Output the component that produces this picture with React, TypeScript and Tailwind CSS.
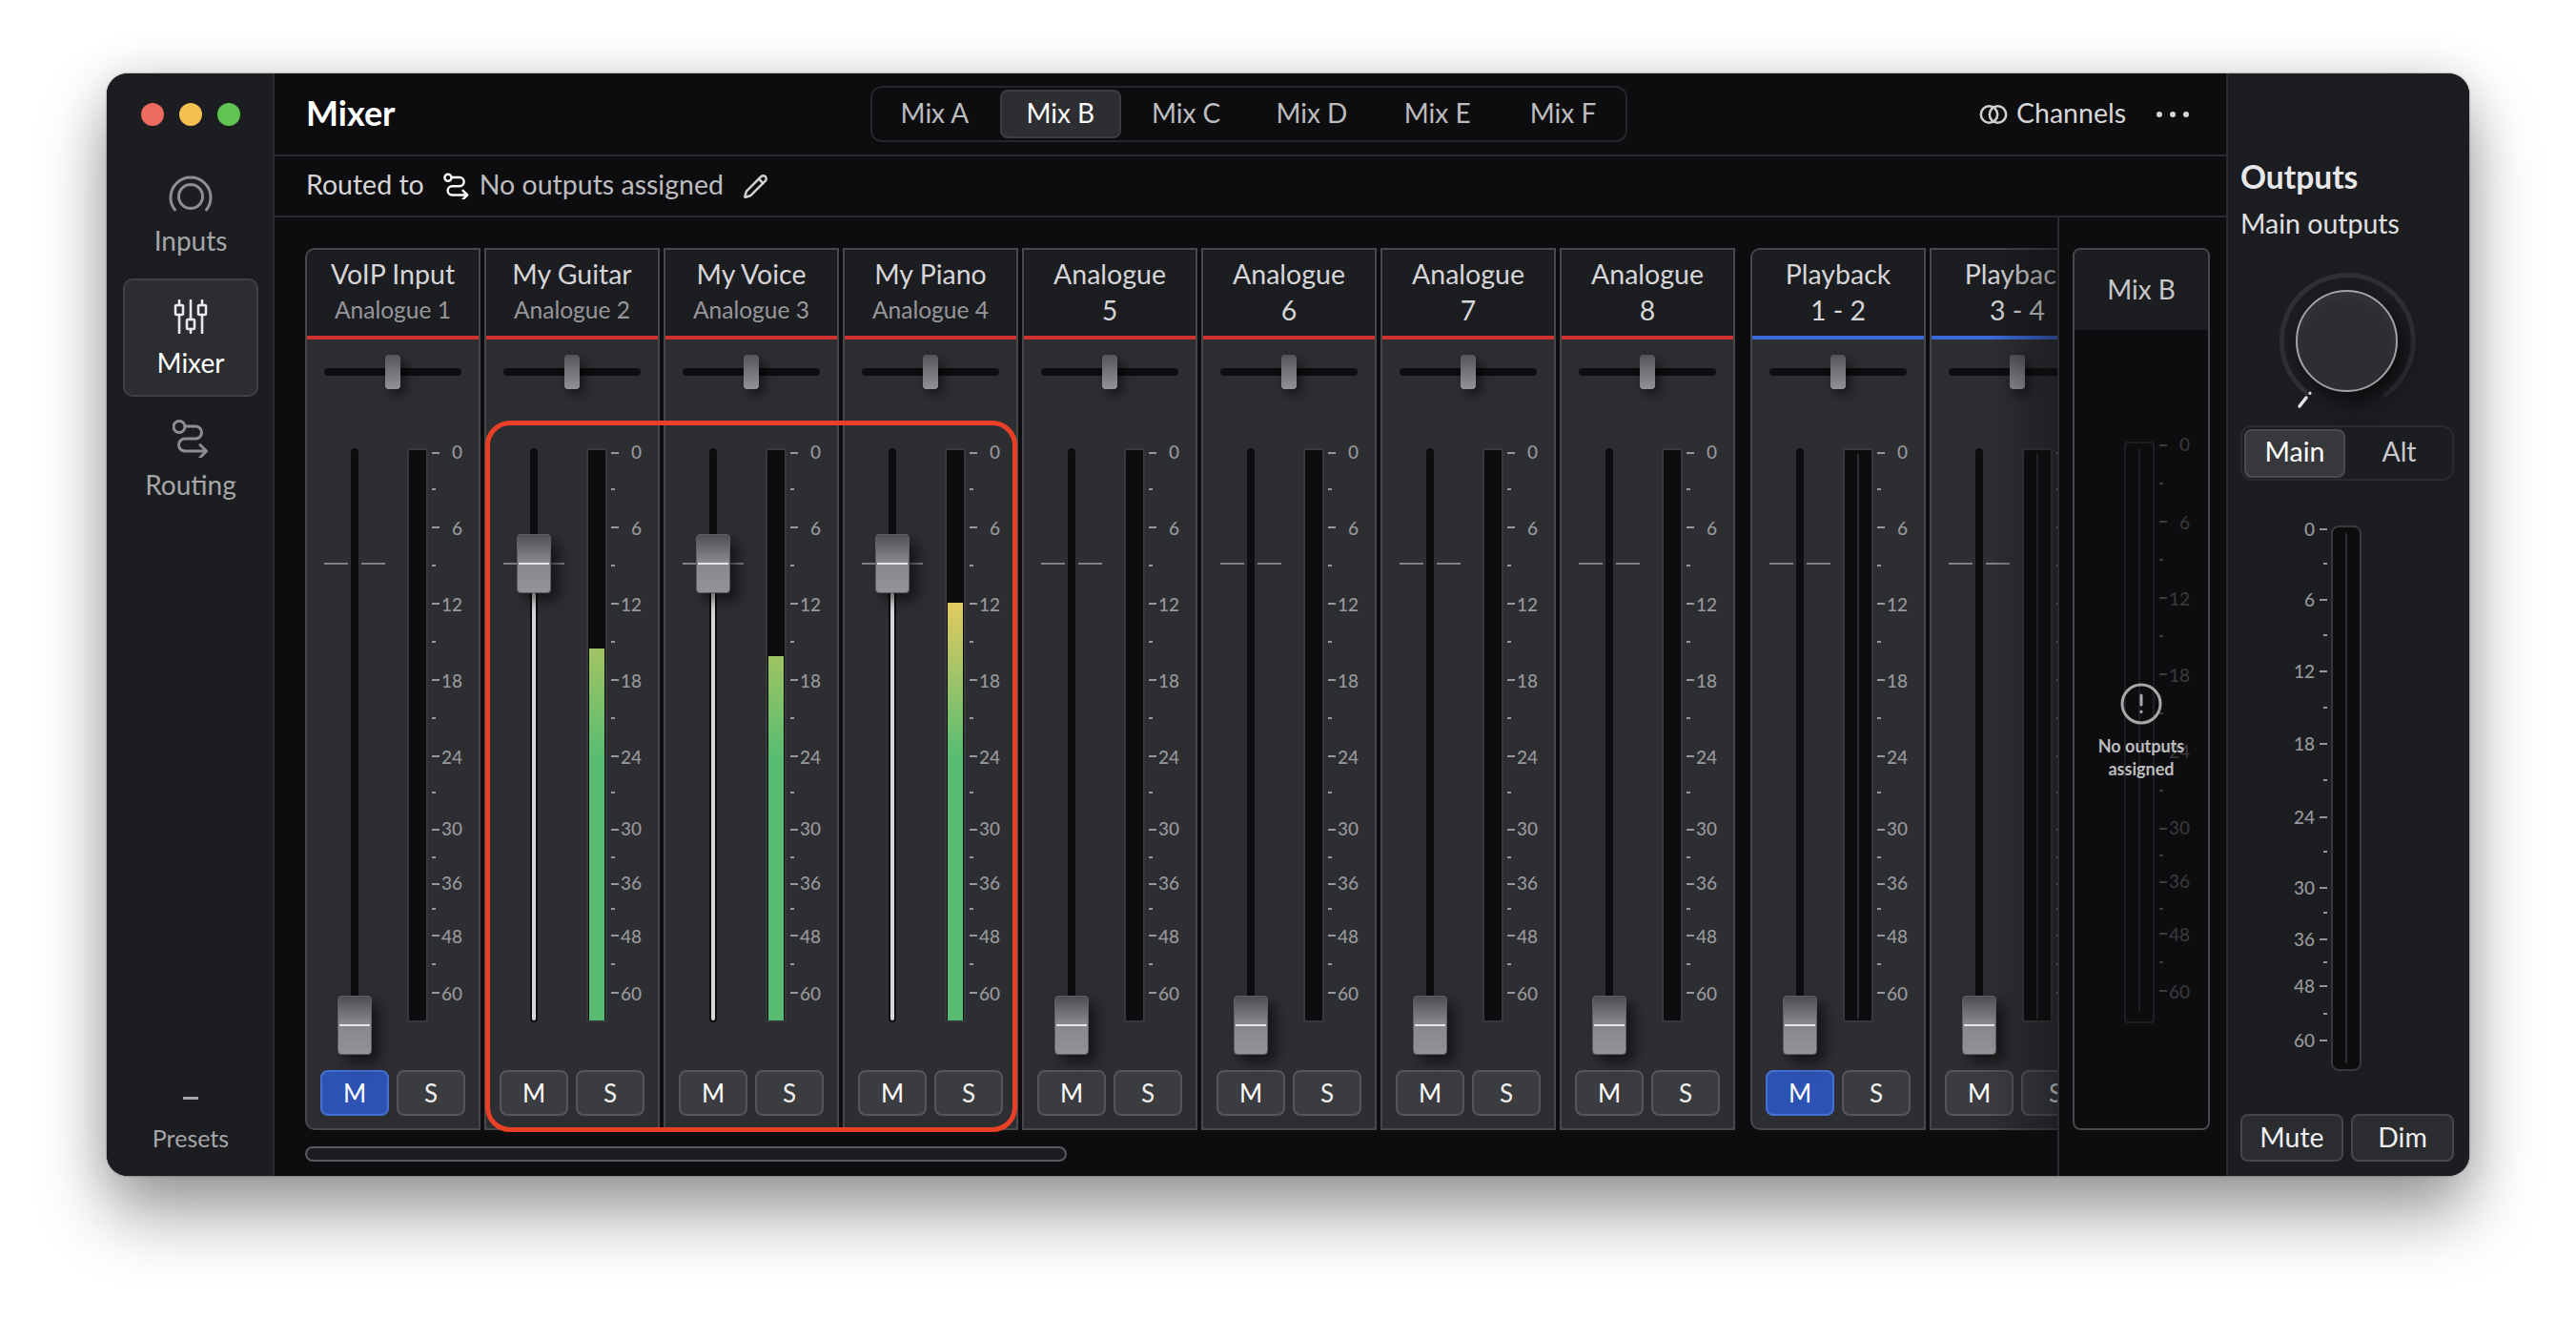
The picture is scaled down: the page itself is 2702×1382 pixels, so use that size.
import React from "react";
import { Pencil } from "lucide-react";

type Mark = { y: number; label?: string };

const stripMarks: Mark[] = [
  { y: 5, label: "0" }, { y: 43 }, { y: 83, label: "6" }, { y: 123 }, { y: 163, label: "12" }, { y: 203 },
  { y: 243, label: "18" }, { y: 283 }, { y: 323, label: "24" }, { y: 361 }, { y: 400, label: "30" }, { y: 429 },
  { y: 457, label: "36" }, { y: 483 }, { y: 511, label: "48" }, { y: 541 }, { y: 571, label: "60" },
];
const mixMarks: Mark[] = [
  { y: 4, label: "0" }, { y: 44 }, { y: 84, label: "6" }, { y: 124 }, { y: 164, label: "12" }, { y: 204 },
  { y: 244, label: "18" }, { y: 285 }, { y: 324, label: "24" }, { y: 366 }, { y: 406, label: "30" }, { y: 434 },
  { y: 462, label: "36" }, { y: 490 }, { y: 516, label: "48" }, { y: 546 }, { y: 576, label: "60" },
];
const outMarks: Mark[] = [
  { y: 4, label: "0" }, { y: 40 }, { y: 78, label: "6" }, { y: 115 }, { y: 153, label: "12" }, { y: 191 },
  { y: 229, label: "18" }, { y: 267 }, { y: 306, label: "24" }, { y: 342 }, { y: 380, label: "30" }, { y: 406 },
  { y: 434, label: "36" }, { y: 458 }, { y: 483, label: "48" }, { y: 512 }, { y: 540, label: "60" },
];

function Scale({ marks, tickColor, textColor, left }: { marks: Mark[]; tickColor: string; textColor: string; left?: boolean }) {
  return (
    <div className="flex flex-col w-full">
      <div style={{ height: marks[0].y }} />
      {marks.map((m, i) => {
        const h = i < marks.length - 1 ? marks[i + 1].y - m.y : 20;
        const high = m.label === "0" || m.label === "30" || m.label === "36";
        const tick = (
          <div className={`flex w-[10px] shrink-0 ${left ? "justify-end" : "justify-start"}`}>
            <div className={`h-[2px] -mt-[1px] ${m.label ? "w-[8px]" : "w-[4px]"} ${tickColor}`} />
          </div>
        );
        return (
          <div key={i} className="flex items-start" style={{ height: h }}>
            {!left && tick}
            <div className={`flex-1 text-right h-[20px] leading-[20px] text-[19px] font-medium ${textColor} ${left ? "pr-[3px] -mt-[10px]" : high ? "-mt-[11px]" : "-mt-[9px]"}`}>{m.label}</div>
            {left && tick}
          </div>
        );
      })}
    </div>
  );
}

function Fader({ active }: { active: boolean }) {
  return (
    <div className="relative w-[95px] h-full pl-[46px]">
      <div className="w-[8px] h-full rounded-full bg-[#0d0d0f] flex flex-col items-center justify-end pb-[2px]">
        {active && <div className="w-[4px] h-[448px] bg-[#d6d6d8] rounded-b-full" />}
      </div>
      <div className="absolute left-[18px] top-[120px] w-[64px] flex justify-between">
        <div className="w-[25px] h-[2px] bg-[#7f8084]" />
        <div className="w-[25px] h-[2px] bg-[#7f8084]" />
      </div>
      <div
        className={`absolute left-[32px] w-[36px] h-[62px] rounded-[4px] border border-[#5f6064] bg-[linear-gradient(180deg,#4e4f53_0%,#87878b_45%,#929297_100%)] shadow-[8px_8px_14px_rgba(0,0,0,0.55)] pt-[29px] px-[1px] ${active ? "top-[90px]" : "top-[574px]"}`}
      >
        <div className="h-[2px] bg-[#e6e6e8]" />
      </div>
    </div>
  );
}

type StripProps = {
  name: string;
  sub: string;
  big?: boolean;
  blue?: boolean;
  first?: boolean;
  active?: boolean;
  muted?: boolean;
  stereo?: boolean;
  fillH?: number;
  fillClass?: string;
};

function Strip({ name, sub, big, blue, first, active, muted, stereo, fillH, fillClass }: StripProps) {
  return (
    <div className={`w-[184px] h-[925px] shrink-0 border-2 border-[#47484c] bg-[#2d2e32] flex flex-col ${first ? "rounded-l-[10px]" : ""}`}>
      <div className={`h-[94px] bg-[#1c1d21] border-b-4 pt-[7px] text-center ${first ? "rounded-tl-[8px]" : ""} ${blue ? "border-[#3b69d8]" : "border-[#cf3230]"}`}>
        <div className="h-[36px] leading-[36px] text-[28.5px] text-[#d6d6d8] whitespace-nowrap">{name}</div>
        <div className={`mt-[2px] h-[36px] leading-[36px] whitespace-nowrap ${big ? "text-[28.5px] text-[#d6d6d8]" : "text-[24.5px] text-[#97979b]"}`}>{sub}</div>
      </div>
      <div className="relative mt-[16px] h-[36px] mx-[18px] flex items-center">
        <div className="w-full h-[8px] rounded-full bg-[#0d0d0f]" />
        <div className="absolute left-[64px] top-0 w-[16px] h-[36px] rounded-[4px] bg-[linear-gradient(180deg,#55565a_0%,#929297_100%)] shadow-[5px_6px_12px_rgba(0,0,0,0.55)]" />
      </div>
      <div className="mt-[62px] h-[602px] flex">
        <Fader active={!!active} />
        <div className="w-[32px] h-full flex justify-end">
          <div className={`relative h-full rounded-[3px] border-2 border-[#38393c] bg-[#0d0d0f] flex flex-col justify-end px-[1px] ${stereo ? "w-[32px] items-center" : "w-[22px]"}`}>
            {stereo && <div className="w-[2px] h-[592px] mb-[2px] bg-[#2d2e32]" />}
            {fillClass && <div className={`w-full ${fillClass}`} style={{ height: fillH }} />}
          </div>
        </div>
        <div className="ml-[4px] w-[32px] h-full">
          <Scale marks={stripMarks} tickColor="bg-[#97979b]" textColor="text-[#97979b]" />
        </div>
      </div>
      <div className="mt-[50px] px-[14px] flex gap-[8px]">
        <button className={`w-[72px] h-[48px] rounded-[8px] border-2 text-[26px] leading-none text-white ${muted ? "bg-[#2c53b4] border-[#4470d4]" : "bg-[#3b3c40] border-[#56575b]"}`}>M</button>
        <button className="w-[72px] h-[48px] rounded-[8px] border-2 text-[26px] leading-none text-[#eeeeef] bg-[#3b3c40] border-[#56575b]">S</button>
      </div>
    </div>
  );
}

function InputsIcon() {
  return (
    <svg width="48" height="48" viewBox="0 0 48 48" fill="none" stroke="#8e8e92" strokeWidth="3" strokeLinecap="round">
      <path d="M7.5 40 A21 21 0 1 1 40.5 40" />
      <circle cx="24" cy="26" r="12.5" />
    </svg>
  );
}

function MixerIcon() {
  return (
    <svg width="36" height="36" viewBox="0 0 36 36" fill="none" stroke="#e8e8ea" strokeWidth="2.6" strokeLinecap="round">
      <path d="M6 1V6M6 16V35M18 1V21M18 31V35M30 1V6M30 16V35" />
      <rect x="2" y="6" width="8" height="10" rx="1" />
      <rect x="14" y="21" width="8" height="10" rx="1" />
      <rect x="26" y="6" width="8" height="10" rx="1" />
    </svg>
  );
}

function RoutingIcon({ size, color, sw, r = 6 }: { size: number; color: string; sw: number; r?: number }) {
  return (
    <svg width={size} height={size * (40 / 38)} viewBox="0 0 38 40" fill="none" stroke={color} strokeWidth={sw} strokeLinecap="round" strokeLinejoin="round">
      <circle cx="7" cy="7.5" r={r} />
      <path d="M13 7H24A6.5 6.5 0 0 1 24 20H13A6.5 6.5 0 0 0 13 33H35" />
      <path d="M29 26.5L35.5 33L29 39.5" />
    </svg>
  );
}

function NavItem({ label, active, children }: { label: string; active?: boolean; children: React.ReactNode }) {
  return (
    <div className={`w-[142px] h-[124px] rounded-[10px] border-2 flex flex-col items-center ${active ? "bg-[#2c2d30] border-[#3f4043]" : "border-transparent"}`}>
      <div className="mt-[14px] h-[48px] flex items-center justify-center">{children}</div>
      <div className={`mt-[8px] h-[32px] leading-[32px] text-[28px] ${active ? "text-white" : "text-[#a6a6aa]"}`}>{label}</div>
    </div>
  );
}

export default function App() {
  const tabs = ["Mix A", "Mix B", "Mix C", "Mix D", "Mix E", "Mix F"];
  return (
    <div className="w-[2702px] h-[1382px] bg-white pt-[77px] pl-[112px] overflow-hidden font-['Lato',sans-serif]">
      <div className="w-[2478px] h-[1156px] rounded-[22px] overflow-hidden flex bg-[#0d0d0f] shadow-[0_0_2px_rgba(0,0,0,0.6),0_40px_70px_rgba(0,0,0,0.38),0_0_50px_rgba(0,0,0,0.12)]">
        {/* Sidebar */}
        <div className="w-[176px] shrink-0 bg-[#1c1d21] border-r-2 border-[#2a2b2e] pl-[2px] flex flex-col items-center">
          <div className="mt-[31px] flex gap-[16px]">
            <div className="w-[24px] h-[24px] rounded-full bg-[#ec6a5e]" />
            <div className="w-[24px] h-[24px] rounded-full bg-[#f4bf4f]" />
            <div className="w-[24px] h-[24px] rounded-full bg-[#61c554]" />
          </div>
          <div className="mt-[32px] flex flex-col gap-[4px]">
            <NavItem label="Inputs"><InputsIcon /></NavItem>
            <NavItem label="Mixer" active><MixerIcon /></NavItem>
            <NavItem label="Routing"><RoutingIcon size={38} color="#8e8e92" sw={3} /></NavItem>
          </div>
          <div className="flex-1" />
          <div className="w-[16px] h-[3px] bg-[#a6a6aa]" />
          <div className="mt-[24px] mb-[24px] h-[32px] leading-[32px] text-[25px] text-[#a6a6aa]">Presets</div>
        </div>

        {/* Centre */}
        <div className="flex-1 min-w-0 flex flex-col">
          <div className="h-[87px] shrink-0 border-b-2 border-[#2a2b2e] grid grid-cols-[1fr_auto_1fr] items-center pl-[33px] pr-[39px]">
            <div className="text-[36px] font-bold text-white pb-[3px]">Mixer</div>
            <div className="ml-[3px] w-[794px] h-[59px] rounded-[12px] border-2 border-[#26272b] flex items-center gap-[5px] px-[2px]">
              {tabs.map((t) => (
                <div
                  key={t}
                  className={`w-[127px] h-[51px] rounded-[8px] border-2 flex items-center justify-center pb-[3px] text-[28px] ${t === "Mix B" ? "bg-[#2d2e31] border-[#3c3d40] text-white" : "border-transparent text-[#bdbdc0]"}`}
                >
                  {t}
                </div>
              ))}
            </div>
            <div className="flex items-center justify-end">
              <svg width="30" height="22" viewBox="0 0 30 22" fill="none" stroke="#d0d0d2" strokeWidth="2.6">
                <circle cx="10.5" cy="11" r="8.7" />
                <circle cx="19.5" cy="11" r="8.7" />
              </svg>
              <div className="ml-[9px] text-[28.5px] text-[#d6d6d8] pb-[3px]">Channels</div>
              <div className="ml-[32px] flex gap-[8px]">
                <div className="w-[6px] h-[6px] rounded-full bg-[#d6d6d8]" />
                <div className="w-[6px] h-[6px] rounded-full bg-[#d6d6d8]" />
                <div className="w-[6px] h-[6px] rounded-full bg-[#d6d6d8]" />
              </div>
            </div>
          </div>
          <div className="h-[64px] shrink-0 border-b-2 border-[#2a2b2e] flex items-center pl-[33px]">
            <div className="text-[28.5px] text-[#d6d6d8] pb-[3px]">Routed to</div>
            <div className="ml-[20px]"><RoutingIcon size={27} color="#ffffff" sw={3.4} r={5} /></div>
            <div className="ml-[11px] text-[28.5px] text-[#bdbdc0] pb-[3px]">No outputs assigned</div>
            <Pencil className="ml-[20px] w-[27px] h-[27px] text-[#d0d0d2]" strokeWidth={2.2} />
          </div>
          <div className="flex-1 min-h-0 flex">
            <div className="relative flex-1 min-w-0 overflow-hidden pl-[32px] pt-[32px]">
              <div className="relative flex w-max">
                <div className="flex gap-[4px]">
                  <Strip first name="VoIP Input" sub="Analogue 1" muted />
                  <Strip name="My Guitar" sub="Analogue 2" active fillH={390} fillClass="bg-[linear-gradient(180deg,#a2c463_0,#58bd72_115px)]" />
                  <Strip name="My Voice" sub="Analogue 3" active fillH={382} fillClass="bg-[linear-gradient(180deg,#9fc463_0,#58bd72_107px)]" />
                  <Strip name="My Piano" sub="Analogue 4" active fillH={438} fillClass="bg-[linear-gradient(180deg,#e2ca5e_0,#58bd72_160px)]" />
                  <Strip name="Analogue" sub="5" big />
                  <Strip name="Analogue" sub="6" big />
                  <Strip name="Analogue" sub="7" big />
                  <Strip name="Analogue" sub="8" big />
                </div>
                <div className="ml-[16px] flex gap-[4px]">
                  <Strip first blue stereo name="Playback" sub="1 - 2" big muted />
                  <Strip blue stereo name="Playback" sub="3 - 4" big />
                </div>
                <div className="absolute left-[189px] top-[181px] w-[558px] h-[746px] rounded-[26px] border-[5px] border-[#e83f25]" />
              </div>
              <div className="mt-[17px] w-[799px] h-[16px] rounded-full border-2 border-[#5a5b5f] bg-[#1c1d21]" />
              <div className="absolute top-0 right-0 bottom-0 w-[70px] bg-[linear-gradient(90deg,rgba(13,13,15,0)_0%,rgba(13,13,15,0.45)_100%)]" />
            </div>
            <div className="w-[177px] shrink-0 border-l-2 border-[#2a2b2e] pl-[14px] pt-[32px]">
              <div className="w-[144px] h-[925px] rounded-[8px] border-2 border-[#47484c] overflow-hidden flex flex-col">
                <div className="h-[84px] shrink-0 bg-[#1c1d21] flex items-center justify-center pb-[3px] text-[28px] text-[#c8c8ca]">Mix B</div>
                <div className="relative flex-1 pt-[117px] pl-[52px] flex">
                  <div className="w-[32px] h-[610px] border-2 border-[#1e1f22] rounded-[3px] flex justify-center">
                    <div className="w-[2px] h-[590px] mt-[6px] bg-[#1e1f22]" />
                  </div>
                  <div className="ml-[5px] w-[32px] h-[610px]">
                    <Scale marks={mixMarks} tickColor="bg-[#3a3b3e]" textColor="text-[#37383b]" />
                  </div>
                  <div className="absolute left-0 right-0 top-[370px] flex flex-col items-center">
                    <svg width="44" height="44" viewBox="0 0 44 44" fill="none" stroke="#a8a8ab" strokeWidth="3" strokeLinecap="round">
                      <circle cx="22" cy="22" r="20" />
                      <path d="M22 13V23" />
                      <path d="M22 30V30.5" />
                    </svg>
                    <div className="mt-[10px] text-center text-[18px] leading-[24px] font-bold text-[#bdbdc0]">No outputs<br />assigned</div>
                  </div>
                </div>
              </div>
            </div>
          </div>
        </div>

        {/* Outputs */}
        <div className="w-[255px] shrink-0 bg-[#1c1d21] border-l-2 border-[#2a2b2e] pl-[13px] pr-[16px] pt-[90px] flex flex-col">
          <div className="h-[36px] leading-[36px] text-[33.5px] font-bold text-[#e8e8ea]">Outputs</div>
          <div className="mt-[13px] h-[36px] leading-[36px] text-[28.5px] text-[#e0e0e2]">Main outputs</div>
          <div className="relative mt-[25px] self-center mr-[1px] w-[160px] h-[160px] flex items-center justify-center">
            <svg className="absolute inset-0" width="160" height="160" viewBox="0 0 160 160" fill="none" strokeLinecap="round">
              <path d="M38 135A69 69 0 1 1 120 137" stroke="#2f3034" strokeWidth="5" />
              <path d="M41 135V135.5" stroke="#e8e8ea" strokeWidth="3" />
              <path d="M37 140L30 149" stroke="#e8e8ea" strokeWidth="3.5" />
            </svg>
            <div className="relative w-[107px] h-[107px] rounded-full border-2 border-[#a2a2a6] bg-[radial-gradient(circle_at_50%_55%,#2d2e32_60%,#3c3d41_100%)] shadow-[8px_10px_22px_rgba(0,0,0,0.6)]" />
          </div>
          <div className="mt-[9px] h-[58px] rounded-[12px] border-2 border-[#2a2b2e] flex items-center px-[2px]">
            <div className="w-[106px] h-[51px] rounded-[8px] border-2 border-[#4a4b4f] bg-[#37383b] flex items-center justify-center pb-[3px] text-[28.5px] text-white">Main</div>
            <div className="flex-1 pl-[3px] flex items-center justify-center pb-[3px] text-[28.5px] text-[#c8c8ca]">Alt</div>
          </div>
          <div className="mt-[47px] h-[572px] flex">
            <div className="w-[91px] h-full">
              <Scale left marks={outMarks} tickColor="bg-[#97979b]" textColor="text-[#97979b]" />
            </div>
            <div className="ml-[4px] w-[32px] h-full rounded-[8px] border-2 border-[#38393c] bg-[#0d0d0f] flex justify-center">
              <div className="w-[2px] h-[556px] mt-[6px] bg-[#2d2e32]" />
            </div>
          </div>
          <div className="mt-[45px] flex gap-[8px]">
            <button className="w-[108px] h-[50px] rounded-[8px] border-2 border-[#46474b] bg-[#2b2c2f] pb-[2px] text-[28.5px] leading-none text-[#eeeeef]">Mute</button>
            <button className="w-[108px] h-[50px] rounded-[8px] border-2 border-[#46474b] bg-[#2b2c2f] pb-[2px] text-[28.5px] leading-none text-[#eeeeef]">Dim</button>
          </div>
        </div>
      </div>
    </div>
  );
}
